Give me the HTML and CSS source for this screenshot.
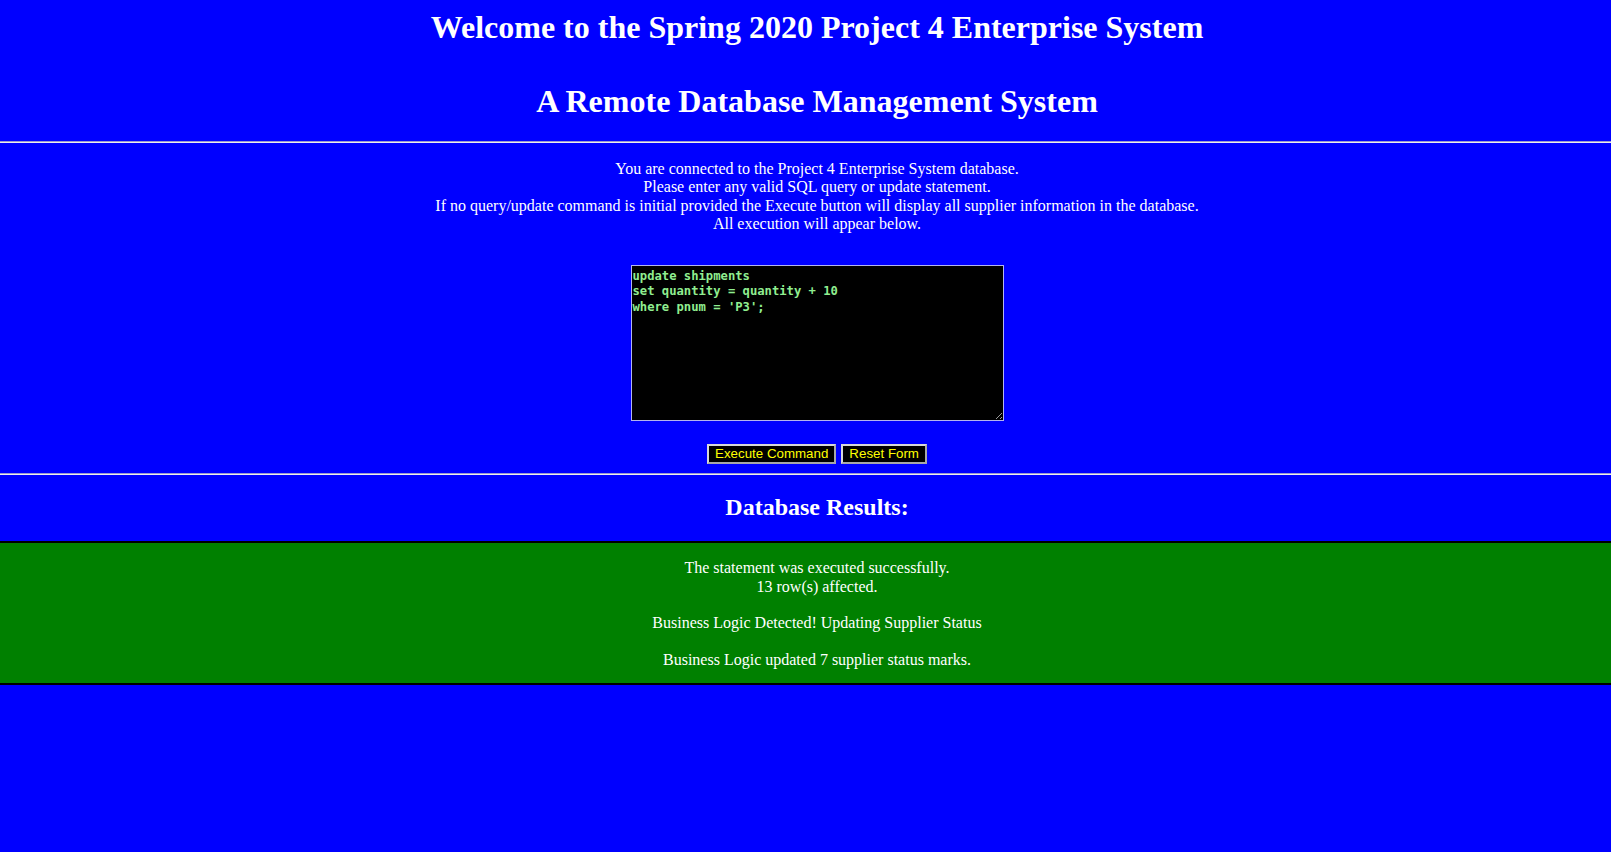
FILE: index.html
```html
<!DOCTYPE html>
<html>
<head>
<meta charset="utf-8">
<title>Project 4 Enterprise System</title>
<link rel="stylesheet" href="styles.css">
</head>
<body>
<div class="page">
  <header class="banner">
    <h1 class="title">Welcome to the Spring 2020 Project 4 Enterprise System<br><br>A Remote Database Management System</h1>
  </header>
  <hr class="rule">
  <section class="intro">
    <p class="intro-text">You are connected to the Project 4 Enterprise System database.<br>Please enter any valid SQL query or update statement.<br>If no query/update command is initial provided the Execute button will display all supplier information in the database.<br>All execution will appear below.</p>
    <form class="query-form">
      <textarea class="sql-box" spellcheck="false">update shipments
set quantity = quantity + 10
where pnum = 'P3';</textarea>
      <div class="actions">
        <button type="button" class="btn">Execute Command</button>
        <button type="reset" class="btn">Reset Form</button>
      </div>
    </form>
  </section>
  <hr class="rule rule-low">
  <h2 class="results-title">Database Results:</h2>
  <div class="result-box">
    <p class="result-text">The statement was executed successfully.<br>13 row(s) affected.<br><br>Business Logic Detected! Updating Supplier Status<br><br>Business Logic updated 7 supplier status marks.</p>
  </div>
</div>
</body>
</html>
```

FILE: styles.css
```css
html, body {
  margin: 0;
  padding: 0;
  background: #0000ff;
}

body {
  font-family: "Liberation Serif", "Times New Roman", serif;
  color: #ffffff;
  min-height: 852px;
}

.page {
  display: flex;
  flex-direction: column;
}

.banner {
  padding: 9px 0 0 23px;
  text-align: center;
}

.title {
  margin: 0;
  font-size: 32px;
  font-weight: bold;
  line-height: 37px;
}

.rule {
  margin: 21px 0 0 0;
  height: 0;
  border: 0;
  border-top: 1px solid #9a9ad0;
  border-bottom: 1px solid #eeeeee;
}

.rule-low {
  margin-top: 9px;
}

.intro {
  padding-left: 23px;
  display: flex;
  flex-direction: column;
  align-items: center;
  text-align: center;
}

.intro-text {
  margin: 17px 0 0 0;
  font-size: 16px;
  line-height: 18.4px;
}

.query-form {
  margin-top: 31px;
  display: flex;
  flex-direction: column;
  align-items: center;
}

.sql-box {
  box-sizing: border-box;
  width: 373px;
  height: 156px;
  margin: 0;
  padding: 3px 1px 2px 1px;
  background: #000000;
  color: #90ee90;
  border: 1px solid #b4b4ee;
  font-family: "DejaVu Sans Mono", "Liberation Mono", monospace;
  font-size: 12.2px;
  font-weight: bold;
  line-height: 15.5px;
  outline: none;
}

.actions {
  margin-top: 23px;
  display: flex;
  gap: 5px;
}

.btn {
  box-sizing: border-box;
  height: 20px;
  margin: 0;
  padding: 0 6px;
  background: #000000;
  color: #ffff00;
  border: 2px solid #d8d8d8;
  border-right-color: #a8a8a8;
  border-bottom-color: #a8a8a8;
  font-family: "Liberation Sans", Arial, sans-serif;
  font-size: 13.333px;
  line-height: 14px;
}

.results-title {
  margin: 19px 0 0 0;
  padding-left: 23px;
  text-align: center;
  font-size: 24px;
  font-weight: bold;
  line-height: 27.6px;
}

.result-box {
  margin-top: 20px;
  background: #008000;
  border-top: 2px solid #000000;
  border-bottom: 2px solid #000000;
  padding: 16px 0 13px 23px;
  text-align: center;
}

.result-text {
  margin: 0;
  font-size: 16px;
  line-height: 18.4px;
}
```
